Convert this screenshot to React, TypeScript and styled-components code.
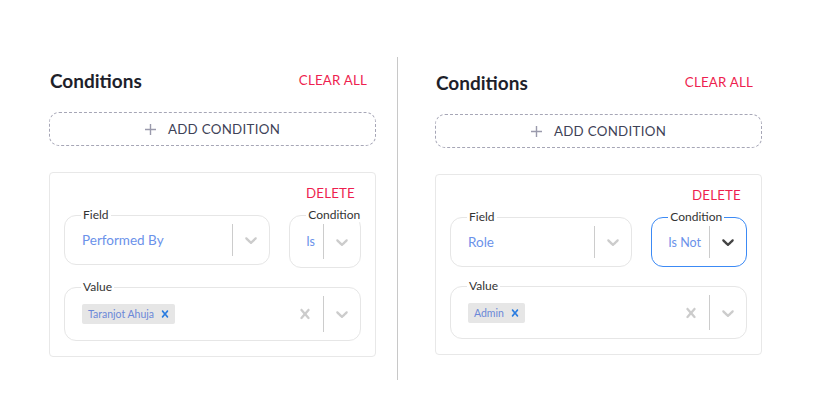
import styled, { createGlobalStyle } from "styled-components";

const GlobalStyle = createGlobalStyle`
    body {
        margin: 0;
        background: #fff;
        font-family: Lato, "Noto Sans", sans-serif;
    }
`

type ConditionType = {
    field: string
    condition: string
    value: string
    conditionHeight: number
    valueHeight: number
    focused?: boolean
}

const Chevron = ({dark}: { dark?: boolean }) => (
    <svg width="20" height="20" viewBox="0 0 20 20" fill={dark ? "#444" : "#ccc"}>
        <path
            d="M4.516 7.548c0.436-0.446 1.043-0.481 1.576 0l3.908 3.747 3.908-3.747c0.533-0.481 1.141-0.446 1.574 0 0.436 0.445 0.408 1.197 0 1.615-0.406 0.418-4.695 4.502-4.695 4.502-0.217 0.223-0.502 0.335-0.787 0.335s-0.57-0.112-0.789-0.335c0 0-4.287-4.084-4.695-4.502s-0.436-1.17 0-1.615z"/>
    </svg>
)

const Cross = ({size, color}: { size: number, color: string }) => (
    <svg width={size} height={size} viewBox="0 0 20 20" fill={color}>
        <path
            d="M14.348 14.849c-0.469 0.469-1.229 0.469-1.697 0l-2.651-3.030-2.651 3.029c-0.469 0.469-1.229 0.469-1.697 0-0.469-0.469-0.469-1.229 0-1.697l2.758-3.15-2.759-3.152c-0.469-0.469-0.469-1.228 0-1.697s1.228-0.469 1.697 0l2.652 3.031 2.651-3.031c0.469-0.469 1.228-0.469 1.697 0s0.469 1.229 0 1.697l-2.758 3.152 2.758 3.15c0.469 0.469 0.469 1.229 0 1.698z"/>
    </svg>
)

const Plus = () => (
    <svg width="11" height="11" viewBox="0 0 11 11" stroke="#9a9aac" strokeWidth="1.4">
        <path d="M5.5 0v11M0 5.5h11"/>
    </svg>
)

const Panel = (props: ConditionType) => {
    return (
        <StyledPanel>
            <Header>
                <Title>Conditions</Title>
                <RedLink>CLEAR ALL</RedLink>
            </Header>
            <AddButton>
                <Plus/>
                <span>ADD CONDITION</span>
            </AddButton>
            <Card>
                <DeleteRow>
                    <RedLink>DELETE</RedLink>
                </DeleteRow>
                <FieldsRow>
                    <Box $grow $height={50}>
                        <Legend>Field</Legend>
                        <ValueText>{props.field}</ValueText>
                        <Separator/>
                        <Indicator><Chevron/></Indicator>
                    </Box>
                    <Box $height={props.conditionHeight} $focused={props.focused}>
                        <Legend>Condition</Legend>
                        <ValueText $compact>{props.condition}</ValueText>
                        <Separator/>
                        <Indicator><Chevron dark={props.focused}/></Indicator>
                    </Box>
                </FieldsRow>
                <Box $grow $height={props.valueHeight}>
                    <Legend>Value</Legend>
                    <ChipArea>
                        <Chip>
                            <span>{props.value}</span>
                            <ChipRemove><Cross size={14} color="#2b7de0"/></ChipRemove>
                        </Chip>
                    </ChipArea>
                    <Indicator><Cross size={20} color="#ccc"/></Indicator>
                    <Separator/>
                    <Indicator><Chevron/></Indicator>
                </Box>
            </Card>
        </StyledPanel>
    )
}

export default function App() {
    return (
        <>
            <GlobalStyle/>
            <Page>
                <Panel field="Performed By" condition="Is" value="Taranjot Ahuja"
                       conditionHeight={53} valueHeight={54}/>
                <Divider/>
                <Panel field="Role" condition="Is Not" value="Admin"
                       conditionHeight={50} valueHeight={53} focused/>
            </Page>
        </>
    )
}

const Page = styled.div`
    display: flex;
    align-items: center;
    margin-top: 45px;
    padding-left: 49px;
`

const Divider = styled.div`
    width: 1px;
    height: 323px;
    margin: 12px 37px 0 21px;
    background: #c8c8c8;
`

const StyledPanel = styled.div`
    width: 327px;
    display: flex;
    flex-direction: column;
`

const Header = styled.div`
    display: flex;
    justify-content: space-between;
    align-items: center;
    height: 24px;
    padding: 0 9px 0 1px;
`

const Title = styled.h2`
    margin: 0;
    font-size: 19px;
    font-weight: 700;
    color: #1e1f2b;
`

const RedLink = styled.span`
    font-size: 13.3px;
    color: #ee1f4f;
    letter-spacing: 0.2px;
    cursor: pointer;
`

const AddButton = styled.button`
    margin-top: 20px;
    height: 34px;
    border: 1px dashed #a6a6b6;
    border-radius: 10px;
    background: #fff;
    display: flex;
    align-items: center;
    justify-content: center;
    gap: 12px;
    font-family: inherit;
    font-size: 13.3px;
    letter-spacing: 0.3px;
    color: #3e4257;
    cursor: pointer;
`

const Card = styled.div`
    margin-top: 26px;
    border: 1px solid #e8e8e8;
    border-radius: 4px;
    padding: 10px 14px 15px;
    display: flex;
    flex-direction: column;
`

const DeleteRow = styled.div`
    display: flex;
    justify-content: flex-end;
    line-height: 20px;
    padding-right: 6px;
`

const FieldsRow = styled.div`
    display: flex;
    align-items: flex-start;
    gap: 19px;
    margin-top: 12px;
    margin-bottom: 19px;
`

const Box = styled.div<{ $grow?: boolean, $height: number, $focused?: boolean }>`
    position: relative;
    box-sizing: border-box;
    flex: ${p => p.$grow ? "1 1 auto" : "0 0 auto"};
    height: ${p => p.$height}px;
    border: 1px solid ${p => p.$focused ? "#3c8af5" : "#e6e6e6"};
    border-radius: 12px;
    display: flex;
    align-items: center;
    padding: 8px 0;
`

const Legend = styled.span`
    position: absolute;
    top: -8px;
    left: 16px;
    padding: 0 2px;
    background: #fff;
    font-size: 12px;
    line-height: 14px;
    color: #333;
`

const ValueText = styled.div<{ $compact?: boolean }>`
    flex: ${p => p.$compact ? "0 0 auto" : "1 1 auto"};
    padding-left: ${p => p.$compact ? 16 : 17}px;
    padding-right: ${p => p.$compact ? 8 : 10}px;
    font-size: ${p => p.$compact ? 12.5 : 13.5}px;
    color: #6b92ea;
`

const Separator = styled.div`
    align-self: stretch;
    width: 1px;
    background: #ccc;
`

const Indicator = styled.div`
    display: flex;
    align-items: center;
    padding: 0 8px;
`

const ChipArea = styled.div`
    flex: 1 1 auto;
    padding-left: 17px;
    display: flex;
`

const Chip = styled.div`
    display: flex;
    align-items: center;
    height: 20px;
    background: #e6e6e6;
    border-radius: 2px;
    padding-left: 6px;
    font-size: 10.5px;
    color: #6b88d8;
`

const ChipRemove = styled.span`
    display: flex;
    align-items: center;
    padding: 0 3px 0 4px;
`
